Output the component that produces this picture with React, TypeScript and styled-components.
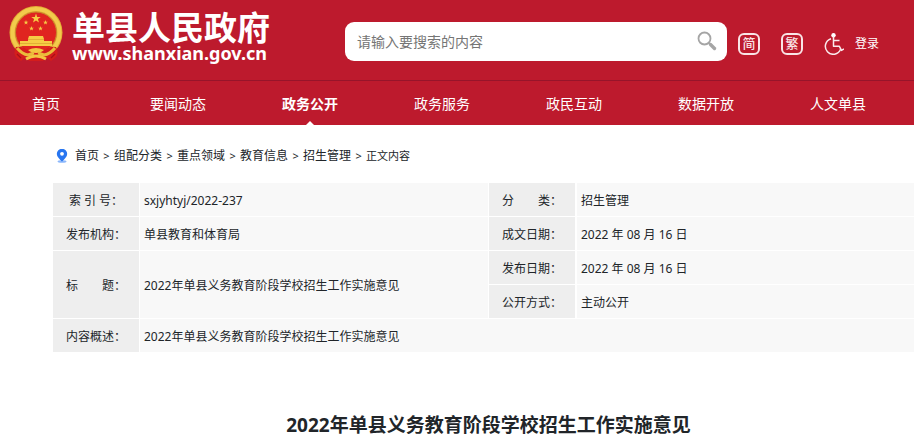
import React from "react";
import styled, { createGlobalStyle } from "styled-components";

const RED = "#bd1a2d";

const GlobalStyle = createGlobalStyle`
  *, *::before, *::after { box-sizing: border-box; }
  body {
    margin: 0;
    background: #fff;
    color: #212529;
    font: 12px/18px "Noto Sans", "Noto Sans CJK SC", sans-serif;
  }
  a { color: inherit; text-decoration: none; }
  button, input { font-family: inherit; }
`;

const Header = styled.header`
  background: ${RED};
  color: #fff;
`;

const TopBar = styled.div`
  display: flex;
  align-items: center;
  height: 81px;
  padding: 0 35px 0 8px;
  border-bottom: 1px solid #97142a;
`;

const Brand = styled.a`
  display: flex;
  flex: none;
  align-items: flex-start;
  gap: 8px;
  height: 80px;
  width: 337px;
`;

const BrandText = styled.span`
  display: flex;
  flex-direction: column;
  padding-top: 6px;
`;

const BrandName = styled.span`
  font-size: 33px;
  line-height: 44px;
  height: 38px;
  font-weight: 700;
  white-space: nowrap;
`;

const BrandUrl = styled.span`
  font-size: 18px;
  line-height: 18px;
  font-weight: 700;
`;

const SearchForm = styled.form`
  display: flex;
  flex: 1;
  align-items: center;
  height: 39px;
  margin-top: 2px;
  padding: 0 10px 0 12px;
  border-radius: 9px;
  background: #fff;
`;

const SearchInput = styled.input`
  flex: 1;
  min-width: 0;
  height: 100%;
  padding: 0;
  border: 0;
  outline: 0;
  background: transparent;
  color: #333;
  font-size: 14px;
  &::placeholder { color: #757575; opacity: 1; }
`;

const IconButton = styled.button`
  display: flex;
  padding: 0;
  border: 0;
  background: transparent;
  color: inherit;
  cursor: pointer;
`;

const Tools = styled.div`
  display: flex;
  flex: none;
  align-items: center;
  margin: 7px 0 0 11px;
`;

const ScriptButton = styled.button`
  width: 22px;
  height: 22px;
  margin-right: 21px;
  padding: 0;
  border: 2px solid #f9e4e6;
  border-radius: 6px;
  background: transparent;
  color: #f9e4e6;
  font-size: 13px;
  font-weight: 500;
  line-height: 17px;
  cursor: pointer;
`;

const Login = styled.a`
  margin-left: 11px;
  white-space: nowrap;
`;

const Nav = styled.nav`
  display: grid;
  grid-template-columns: 112fr repeat(6, 132fr);
  height: 44px;
  padding-right: 10px;
`;

const NavLink = styled.a<{ $active?: boolean }>`
  position: relative;
  font-size: 14px;
  line-height: 46px;
  height: 44px;
  text-align: center;
  font-weight: ${(p) => (p.$active ? 700 : 400)};
  &:first-child { padding-left: 32px; text-align: left; }
  &::after {
    content: "";
    display: ${(p) => (p.$active ? "block" : "none")};
    position: absolute;
    left: 50%;
    bottom: 0;
    margin-left: -4px;
    border: solid transparent;
    border-width: 0 4px 4px;
    border-bottom-color: #fff;
  }
`;

const Main = styled.main`
  padding-left: 53px;
`;

const Crumbs = styled.nav`
  display: flex;
  align-items: center;
  height: 58px;
  padding: 3px 0 0 3px;
  svg { flex: none; margin-right: 7px; }
`;

const Separator = styled.span`
  width: 15px;
  text-align: center;
  font-size: 11px;
`;

const CurrentCrumb = styled.span`
  font-size: 11px;
`;

const InfoTable = styled.table`
  width: 100%;
  table-layout: fixed;
  border-collapse: separate;
  border-spacing: 0;
`;

const Col = styled.col<{ $width?: number }>`
  width: ${(p) => (p.$width ? `${p.$width}px` : "auto")};
`;

const Label = styled.th<{ $wide?: boolean }>`
  height: 34px;
  padding: 2px 0 0;
  border: solid #fff;
  border-width: 0 ${(p) => (p.$wide ? 2 : 1)}px 1px 0;
  background: #eee;
  font-weight: 400;
  text-align: center;
`;

const Value = styled.td<{ $last?: boolean }>`
  height: 34px;
  padding: 2px 4px 0;
  border: solid #fff;
  border-width: 0 ${(p) => (p.$last ? 0 : 1)}px 1px 0;
  background: #f8f8f8;
`;

const Title = styled.h1`
  margin: 0;
  padding: 57px 0 4px 10px;
  font-size: 19px;
  line-height: 30px;
  font-weight: 700;
  text-align: center;
`;

const star = (cx: number, cy: number, r: number) =>
  Array.from({ length: 10 }, (_, i) => {
    const a = (Math.PI * i) / 5 - Math.PI / 2;
    const d = i % 2 ? r * 0.4 : r;
    return `${(cx + d * Math.cos(a)).toFixed(2)},${(cy + d * Math.sin(a)).toFixed(2)}`;
  }).join(" ");

const Emblem = () => (
  <svg width="56" height="64" viewBox="0 0 56 64" aria-hidden="true">
    <circle cx="28" cy="32.500" r="26.500" fill="#e3ac35" />
    <circle cx="28" cy="32.500" r="23.500" fill="none" stroke="#f2cb4c" strokeWidth="4" />
    <circle cx="28" cy="32.500" r="20.500" fill="#e02420" stroke="#c9862a" strokeWidth="1" />
    <g fill="#f6cc45">
      <polygon points={star(28, 18.5, 5)} />
      <polygon points={star(18, 22.5, 2.5)} />
      <polygon points={star(37.5, 22.5, 2.5)} />
      <polygon points={star(23.5, 28.5, 2.5)} />
      <polygon points={star(32.5, 28.5, 2.5)} />
      <path d="M21 36h14l1 3H20zM20 39h16v2H20zM12 41h32v5H12z" />
    </g>
    <path d="M20 39.500h16M12 43.500h32" stroke="#d69a2c" strokeWidth=".6" />
    <path d="M8 47 Q15 46 19 50 L24 48 H32 L37 50 Q41 46 48 47 Q51 53 48 57 L43 61 L38 57 L35 61 H21 L18 57 L13 61 L8 57 Q5 53 8 47Z" fill="#d51d1c" />
    <path d="M20 50 Q28 46 36 50 Q33 53 28 53 Q23 53 20 50Z" fill="#f3c641" />
    <path d="M9 48 Q14 54 20 55 L26 53 M47 48 Q42 54 36 55 L30 53" fill="none" stroke="#eabb3b" strokeWidth="3" />
    <path d="M18 59 Q23 56 28 56 Q33 56 38 59" fill="none" stroke="#f3c641" strokeWidth="3" />
    <path d="M9 54l4 4M47 54l-4 4" stroke="#a90f18" strokeWidth="1.200" />
  </svg>
);

const SearchIcon = () => (
  <svg width="20" height="20" viewBox="0 0 20 20" fill="none" stroke="#a5a5a5" aria-hidden="true">
    <circle cx="7.500" cy="7.500" r="6" strokeWidth="1.800" />
    <path d="M11.800 11.800l2 2" strokeWidth="2" />
    <path d="M13.500 13.500l4 4" strokeWidth="3.400" strokeLinecap="round" />
  </svg>
);

const WheelchairIcon = () => (
  <svg width="20" height="22" viewBox="0 0 20 22" fill="none" stroke="#fbeaec" strokeWidth="1.500" aria-hidden="true">
    <circle cx="9.500" cy="2.200" r="2.200" fill="#fff" stroke="none" />
    <path d="M9.500 3v10.200h5.700l2.300 4.200 2.500-1.400" strokeLinejoin="round" />
    <path d="M9.500 7.500h6" />
    <path d="M7 5.800a7.900 7.900 0 1 0 9.600 10.500" />
  </svg>
);

const PinIcon = () => (
  <svg width="12" height="14" viewBox="0 0 12 14" aria-hidden="true">
    <ellipse cx="6" cy="12.500" rx="4.500" ry="1.300" fill="#8db8fb" />
    <path d="M6 12.500C3.500 10 .8 7.800.8 5a5.200 5.200 0 0 1 10.400 0c0 2.800-2.700 5-5.200 7.500z" fill="#2876f0" />
    <circle cx="6" cy="4.800" r="1.900" fill="#fff" />
  </svg>
);

const navItems = ["首页", "要闻动态", "政务公开", "政务服务", "政民互动", "数据开放", "人文单县"];
const crumbs = ["首页", "组配分类", "重点领域", "教育信息", "招生管理"];
const title = "2022年单县义务教育阶段学校招生工作实施意见";

export default function App() {
  return (
    <>
      <GlobalStyle />
      <Header>
        <TopBar>
          <Brand href="#">
            <Emblem />
            <BrandText>
              <BrandName>单县人民政府</BrandName>
              <BrandUrl>www.shanxian.gov.cn</BrandUrl>
            </BrandText>
          </Brand>
          <SearchForm role="search" onSubmit={(e) => e.preventDefault()}>
            <SearchInput type="text" aria-label="搜索" placeholder="请输入要搜索的内容" />
            <IconButton type="submit" aria-label="搜索">
              <SearchIcon />
            </IconButton>
          </SearchForm>
          <Tools>
            <ScriptButton type="button">简</ScriptButton>
            <ScriptButton type="button">繁</ScriptButton>
            <IconButton type="button" aria-label="无障碍">
              <WheelchairIcon />
            </IconButton>
            <Login href="#">登录</Login>
          </Tools>
        </TopBar>
        <Nav>
          {navItems.map((item) => (
            <NavLink key={item} href="#" $active={item === "政务公开"}>
              {item}
            </NavLink>
          ))}
        </Nav>
      </Header>
      <Main>
        <Crumbs>
          <PinIcon />
          {crumbs.map((item) => (
            <React.Fragment key={item}>
              <a href="#">{item}</a>
              <Separator>&gt;</Separator>
            </React.Fragment>
          ))}
          <CurrentCrumb>正文内容</CurrentCrumb>
        </Crumbs>
        <InfoTable>
          <colgroup>
            <Col $width={87} />
            <Col $width={349} />
            <Col $width={88} />
            <Col />
          </colgroup>
          <tbody>
            <tr>
              <Label scope="row">索 引 号：</Label>
              <Value>sxjyhtyj/2022-237</Value>
              <Label scope="row" $wide>分　　类：</Label>
              <Value $last>招生管理</Value>
            </tr>
            <tr>
              <Label scope="row">发布机构：</Label>
              <Value>单县教育和体育局</Value>
              <Label scope="row" $wide>成文日期：</Label>
              <Value $last>2022 年 08 月 16 日</Value>
            </tr>
            <tr>
              <Label scope="row" rowSpan={2}>标　　题：</Label>
              <Value rowSpan={2}>{title}</Value>
              <Label scope="row" $wide>发布日期：</Label>
              <Value $last>2022 年 08 月 16 日</Value>
            </tr>
            <tr>
              <Label scope="row" $wide>公开方式：</Label>
              <Value $last>主动公开</Value>
            </tr>
            <tr>
              <Label scope="row">内容概述：</Label>
              <Value $last colSpan={3}>{title}</Value>
            </tr>
          </tbody>
        </InfoTable>
        <Title>{title}</Title>
      </Main>
    </>
  );
}
